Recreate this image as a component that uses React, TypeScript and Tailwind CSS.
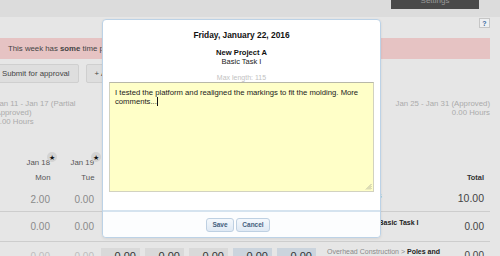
import React from "react";

const days = ["Mon", "Tue", "Wed", "Thu", "Fri", "Sat", "Sun"];

function Star() {
  return (
    <span className="absolute -right-[5px] -top-[5px] w-[10px] h-[10px] rounded-full bg-[#d3d3d3] flex items-center justify-center text-[7px] leading-none text-[#111]">
      ★
    </span>
  );
}

export default function App() {
  return (
    <div className="relative w-[500px] h-[256px] overflow-hidden bg-[#e6e6e6] font-['Liberation_Sans',Arial,sans-serif] text-[#444]">
      {/* top bar */}
      <div className="h-[17px] bg-[#dcdcdc] flex justify-end pr-[21px]">
        <div className="w-[88px] h-[9px] bg-[#4a4a4a] overflow-hidden flex justify-center">
          <span className="text-[8px] leading-[8px] text-[#9a9a9a] -mt-[3px]">Settings</span>
        </div>
      </div>

      {/* help */}
      <div className="h-[21px] flex justify-end pr-[10px] pt-[1px]">
        <div className="w-[11px] h-[10px] border border-[#c6c6c6] bg-[#eef0f2] text-[7px] leading-none font-bold text-[#3b6aa0] flex items-center justify-center">
          ?
        </div>
      </div>

      {/* banner */}
      <div className="mr-[10px] h-[21px] bg-[#e6c3c3] flex items-center pl-[8px] text-[7.8px] text-[#444] whitespace-nowrap">
        This week has&nbsp;<b>some</b>&nbsp;time pending approval.
      </div>

      {/* buttons */}
      <div className="mt-[5px] flex gap-[7px] -ml-[7px] h-[19px]">
        <div className="h-full px-[8px] bg-[#dedede] border border-[#cfcfcf] rounded-[2px] flex items-center text-[7.8px] text-[#444] whitespace-nowrap">
          Submit for approval
        </div>
        <div className="h-full px-[8px] bg-[#dedede] border border-[#cfcfcf] rounded-[2px] flex items-center text-[7.8px] text-[#444] whitespace-nowrap">
          + Add Row
        </div>
      </div>

      {/* week summaries */}
      <div className="mt-[16px] flex text-[7.8px] leading-[9px] text-[#ababab]">
        <div className="-ml-[4.5px] whitespace-nowrap">
          <div>Jan 11 - Jan 17 (Partial</div>
          <div>Approved)</div>
          <div>0.00 Hours</div>
        </div>
        <div className="ml-auto mr-[10px] text-right whitespace-nowrap">
          <div>Jan 25 - Jan 31 (Approved)</div>
          <div>0.00 Hours</div>
        </div>
      </div>

      {/* table header: dates */}
      <div className="mt-[31px] h-[12px] flex pl-[13px] text-[7.8px] leading-[12px] text-[#555]">
        <div className="flex gap-[5px]">
          {["Jan 18", "Jan 19", "Jan 20", "Jan 21", "Jan 22", "Jan 23", "Jan 24"].map((d, i) => (
            <div key={d} className="relative w-[39px] text-right pr-[2px]">
              {d}
              {i < 2 && <Star />}
            </div>
          ))}
        </div>
      </div>

      {/* table header: days */}
      <div className="mt-[3px] h-[12px] flex pl-[13px] text-[7.8px] leading-[12px] text-[#555]">
        <div className="flex gap-[5px]">
          {days.map((d) => (
            <div key={d} className="w-[39px] text-right pr-[1.5px]">
              {d}
            </div>
          ))}
        </div>
        <div className="ml-[11px] w-[125px]" />
        <div className="w-[32px] text-right font-bold text-[7.4px] text-[#333]">Total</div>
      </div>

      {/* row 1 */}
      <div className="mr-[10px] h-[28px] border-b border-[#cdcdcd] flex pl-[13px]">
        <div className="flex gap-[5px] pt-[3px]">
          {["2.00", "0.00", "0.00", "0.00", "0.00", "0.00", "0.00"].map((v, i) => (
            <div key={i} className="w-[39px] flex items-center justify-end pr-[2px] text-[10px] text-[#8a8a8a]">
              {v}
            </div>
          ))}
        </div>
        <div className="ml-[11px] w-[125px] pt-[6.5px] text-[7px] leading-[9px] font-bold text-[#333] whitespace-nowrap">
          Total of all tasks
        </div>
        <div className="w-[32px] pt-[3px] flex items-center justify-end text-[10.5px] text-[#444]">10.00</div>
      </div>

      {/* row 2 */}
      <div className="mr-[10px] h-[30px] border-b border-[#cdcdcd] flex pl-[13px]">
        <div className="flex gap-[5px]">
          {[0, 1, 2, 3, 4, 5, 6].map((i) => (
            <div key={i} className="w-[39px] flex items-center justify-end pr-[2px] text-[10px] text-[#8a8a8a]">
              0.00
            </div>
          ))}
        </div>
        <div className="ml-[11px] w-[125px] pt-[5.5px] text-[7px] leading-[9px] whitespace-nowrap">
          <span className="text-[#8a8a8a]">New Project A &gt; </span>
          <span className="font-bold text-[#222]">Basic Task I</span>
        </div>
        <div className="w-[32px] flex items-center justify-end text-[10px] text-[#444]">0.00</div>
      </div>

      {/* row 3 */}
      <div className="mr-[10px] h-[40px] flex pl-[13px] pt-[6px]">
        <div className="flex gap-[5px]">
          {[0, 1, 2, 3, 4, 5, 6].map((i) => (
            <div
              key={i}
              className={
                i < 2
                  ? "w-[39px] h-[20px] flex justify-end pr-[2px] pt-[3px] text-[10px] leading-[11px] text-[#bdbdbd]"
                  : i < 5
                  ? "w-[39px] h-[20px] bg-[#d9d9d9] flex justify-end pr-[4px] pt-[3px] text-[11px] leading-[11px] text-[#333]"
                  : "w-[39px] h-[20px] bg-[#cbd4dd] flex justify-end pr-[4px] pt-[3px] text-[11px] leading-[11px] text-[#333]"
              }
            >
              0.00
            </div>
          ))}
        </div>
        <div className="ml-[11px] w-[125px] text-[7px] leading-[9px] -mt-[1.5px]">
          <span className="text-[#8a8a8a]">Overhead Construction &gt; </span>
          <span className="font-bold text-[#222]">Poles and Wires</span>
        </div>
        <div className="w-[32px] flex justify-end pt-[2px] text-[10px] leading-[11px] text-[#444]">0.00</div>
      </div>

      {/* dialog */}
      <div className="absolute left-[102px] top-[19px] w-[279px] h-[219px] bg-white border border-[#bcd2e6] rounded-[4px] flex flex-col shadow-[0_1px_3px_rgba(0,0,0,0.08)]">
        <div className="pt-[10px] text-center text-[8.4px] leading-[10px] font-bold text-[#111]">
          Friday, January 22, 2016
        </div>
        <div className="mt-[7.5px] text-center text-[7.6px] leading-[9px] font-bold text-[#111]">New Project A</div>
        <div className="text-center text-[7.5px] leading-[9px] text-[#222]">Basic Task I</div>
        <div className="mt-[7px] text-center text-[7px] leading-[9px] text-[#c2c2c2]">Max length: 115</div>
        <div className="relative mx-[6px] h-[110px] bg-[#ffffc8] border border-[#d2d2c0] border-t-[#b8b8a8] px-[5px] pt-[5px] text-[7.7px] leading-[9.3px] text-[#1a1a1a]">
          I tested the platform and realigned the markings to fit the molding. More comments...
          <span className="inline-block w-[1px] h-[9px] bg-[#111] align-middle ml-[0.5px]" />
          <svg className="absolute right-[1px] bottom-[1px]" width="7" height="7" viewBox="0 0 7 7">
            <path d="M6.5 1 L1 6.5 M6.5 3 L3 6.5 M6.5 5 L5 6.5" stroke="#a8a898" strokeWidth="0.8" />
          </svg>
        </div>
        <div className="flex-1" />
        <div className="h-[27px] border-t-2 border-[#d5e3ef] bg-[#fcfdfe] rounded-b-[4px] flex items-center justify-center gap-[2px] pr-[7px]">
          <div className="w-[28px] h-[14px] rounded-[3px] border border-[#bed0e2] bg-gradient-to-b from-[#f4f8fc] to-[#dfe9f4] flex items-center justify-center text-[6.5px] font-bold text-[#44607c]">
            Save
          </div>
          <div className="w-[34px] h-[14px] rounded-[3px] border border-[#bed0e2] bg-gradient-to-b from-[#f4f8fc] to-[#dfe9f4] flex items-center justify-center text-[6.5px] font-bold text-[#44607c]">
            Cancel
          </div>
        </div>
      </div>
    </div>
  );
}
